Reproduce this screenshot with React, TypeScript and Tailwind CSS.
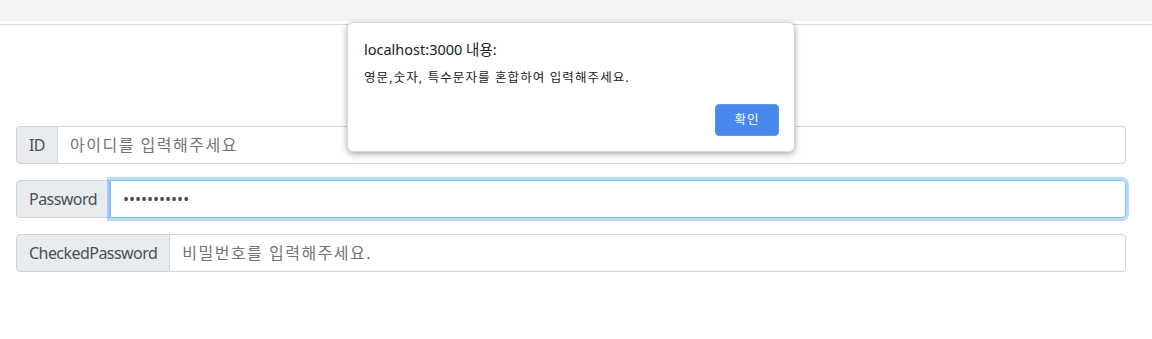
import React from 'react';

const FONT = '"Noto Sans", "Noto Sans CJK KR", sans-serif';

const InputRow = ({ label, children }: { label: string; children: React.ReactNode }) => (
  <div className="flex h-[38px] w-[1110px] mb-4">
    <div className="flex items-center px-3 bg-[#e9ecef] border border-[#ced4da] rounded-l-[4px] text-[16px] tracking-[-0.55px] text-[#495057] whitespace-nowrap">
      {label}
    </div>
    {children}
  </div>
);

const AlertDialog = () => (
  <div className="absolute left-[347px] top-[22px] w-[448px] h-[130px] bg-white rounded-[6px] border border-[#d7d7d7] shadow-[0_2px_6px_rgba(0,0,0,0.35)] flex flex-col">
    <div className="pl-[16px] pt-[16px] text-[14.5px] text-[#202124] leading-[20px]">localhost:3000 내용:</div>
    <div className="pl-[16px] pt-[10px] text-[12.5px] tracking-[1.1px] text-[#202124] leading-[18px]">
      영문,숫자, 특수문자를 혼합하여 입력해주세요.
    </div>
    <div className="flex justify-end pr-[15px] pt-[17px]">
      <button className="w-[64px] h-[32px] rounded-[4px] bg-[#4688ec] border border-[#5b97ef] text-white text-[12.5px] tracking-[1px]">
        확인
      </button>
    </div>
  </div>
);

export default function App() {
  return (
    <div className="relative w-[1152px] h-[339px] bg-white overflow-hidden" style={{ fontFamily: FONT }}>
      <div className="h-[21px] bg-[#f1f3f4]" />
      <div className="h-[4px] border-b border-[#d9d9d9]" />

      <div className="pl-4 pt-[101px]">
        <InputRow label="ID">
          <input
            className="flex-1 px-3 border border-l-0 border-[#ced4da] rounded-r-[4px] text-[16px] tracking-[1.5px] text-[#495057] placeholder:text-[#6c757d] outline-none"
            placeholder="아이디를 입력해주세요"
            style={{ fontFamily: FONT }}
          />
        </InputRow>
        <InputRow label="Password">
          <input
            type="password"
            defaultValue="abcdefghijk"
            className="flex-1 px-3 border border-[#80bdff] rounded-r-[4px] text-[16px] text-[#495057] outline-none shadow-[0_0_0_3px_rgba(0,123,255,0.28)]"
            style={{ fontFamily: FONT }}
          />
        </InputRow>
        <InputRow label="CheckedPassword">
          <input
            className="flex-1 px-3 border border-l-0 border-[#ced4da] rounded-r-[4px] text-[16px] tracking-[1.5px] text-[#495057] placeholder:text-[#6c757d] outline-none"
            placeholder="비밀번호를 입력해주세요."
            style={{ fontFamily: FONT }}
          />
        </InputRow>
      </div>

      <AlertDialog />
    </div>
  );
}
